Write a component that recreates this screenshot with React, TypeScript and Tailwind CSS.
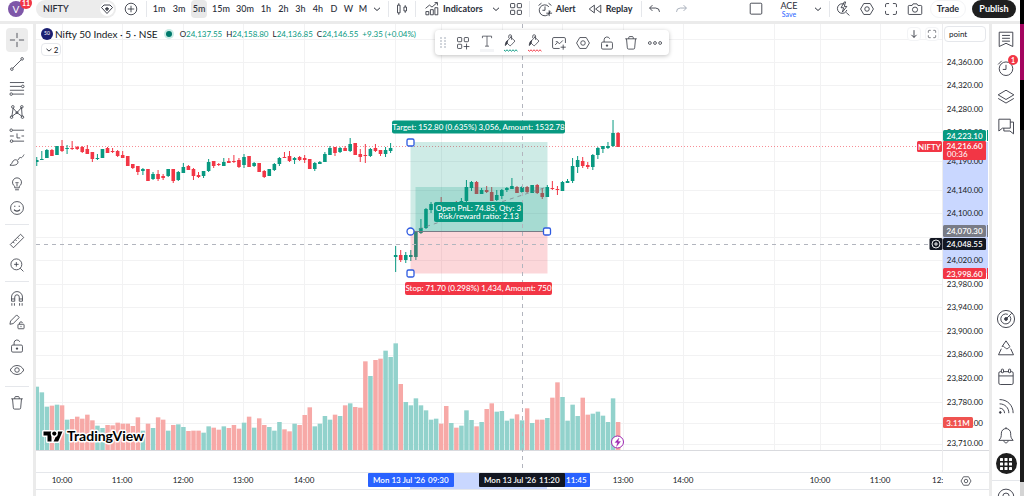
import clsx from "clsx";
import type { ReactNode } from "react";

const UP = "#089981";
const DOWN = "#f23645";

// [direction, body top, body bottom, high, low, volume]
type Candle = ["u" | "d", number, number, number, number, number];

const candles: Candle[] = [
  ["u", 160, 162, 157, 166, 190], ["u", 159, 160, 151, 160, 173], ["u", 150, 158, 149, 158, 130],
  ["d", 150, 156, 149, 156, 133], ["u", 146, 155, 146, 155, 136], ["d", 146, 151, 140, 152, 134],
  ["u", 148, 149, 145, 154, 91], ["d", 148, 149, 141, 150, 93], ["d", 147, 149, 146, 150, 100],
  ["d", 147, 152, 146, 153, 94], ["d", 149, 154, 145, 154, 106], ["d", 152, 159, 152, 162, 89],
  ["u", 158, 159, 154, 160, 73], ["u", 149, 158, 149, 158, 66], ["d", 148, 153, 147, 153, 75],
  ["d", 151, 152, 148, 153, 74], ["d", 151, 156, 150, 157, 82], ["d", 155, 158, 151, 158, 79],
  ["d", 156, 166, 156, 166, 79], ["d", 164, 168, 164, 169, 72], ["d", 166, 172, 166, 175, 98],
  ["u", 169, 171, 168, 175, 58], ["d", 169, 181, 169, 181, 79], ["u", 174, 179, 172, 180, 66],
  ["d", 174, 179, 170, 181, 98], ["d", 176, 178, 174, 180, 91], ["u", 169, 176, 169, 177, 58],
  ["d", 169, 181, 169, 183, 75], ["u", 172, 180, 171, 181, 77], ["u", 167, 173, 163, 173, 69],
  ["d", 166, 170, 165, 170, 57], ["d", 169, 176, 168, 180, 58], ["d", 175, 177, 172, 178, 58],
  ["u", 171, 176, 171, 178, 52], ["u", 162, 171, 159, 172, 71], ["d", 161, 166, 161, 168, 67],
  ["d", 164, 165, 163, 166, 61], ["u", 162, 166, 158, 166, 71], ["d", 161, 163, 158, 163, 66],
  ["d", 161, 162, 155, 163, 75], ["d", 160, 167, 158, 168, 64], ["u", 157, 165, 154, 168, 82],
  ["d", 156, 167, 156, 167, 100], ["u", 163, 166, 162, 167, 67], ["d", 163, 172, 163, 172, 95],
  ["d", 171, 177, 170, 178, 75], ["u", 169, 176, 169, 176, 69], ["u", 164, 170, 163, 171, 58],
  ["u", 158, 164, 157, 166, 84], ["d", 157, 158, 152, 158, 62], ["d", 156, 161, 151, 162, 56],
  ["u", 158, 160, 157, 164, 79], ["d", 157, 160, 156, 161, 75], ["d", 158, 160, 155, 163, 105],
  ["d", 159, 169, 159, 169, 128], ["u", 163, 169, 162, 171, 71], ["u", 162, 164, 161, 164, 79],
  ["u", 154, 162, 152, 162, 102], ["u", 148, 155, 146, 155, 91], ["d", 147, 153, 147, 156, 106],
  ["u", 148, 152, 147, 153, 102], ["d", 148, 151, 146, 151, 134], ["u", 144, 151, 138, 152, 140],
  ["d", 143, 155, 143, 155, 129], ["d", 154, 157, 149, 162, 127], ["d", 155, 156, 144, 163, 266],
  ["u", 149, 156, 148, 157, 222], ["d", 148, 151, 144, 152, 270], ["d", 150, 154, 150, 156, 274],
  ["u", 150, 154, 147, 157, 298], ["u", 148, 151, 143, 153, 279], ["u", 255, 257, 246, 272, 320],
  ["d", 255, 260, 250, 262, 198], ["u", 255, 260, 252, 263, 144], ["u", 255, 257, 250, 261, 134],
  ["u", 231, 257, 231, 260, 155], ["u", 228, 233, 219, 234, 134], ["u", 209, 228, 208, 229, 119],
  ["u", 204, 210, 202, 213, 91], ["u", 203, 209, 202, 210, 94], ["d", 202, 207, 197, 208, 79],
  ["d", 203, 208, 202, 210, 132], ["u", 204, 208, 202, 210, 81], ["d", 203, 208, 201, 209, 67],
  ["u", 201, 206, 198, 208, 73], ["u", 187, 201, 180, 202, 119], ["u", 182, 188, 181, 191, 90],
  ["d", 182, 194, 181, 194, 71], ["u", 190, 194, 188, 194, 84], ["d", 190, 192, 186, 193, 123],
  ["d", 192, 201, 187, 201, 140], ["u", 195, 200, 190, 201, 115], ["u", 190, 196, 189, 199, 117],
  ["u", 188, 190, 187, 192, 88], ["u", 186, 189, 178, 189, 94], ["d", 187, 193, 186, 193, 107],
  ["u", 187, 192, 186, 193, 89], ["d", 187, 192, 186, 193, 125], ["u", 185, 193, 185, 193, 81],
  ["d", 185, 193, 184, 194, 91], ["d", 193, 197, 188, 199, 91], ["u", 187, 197, 185, 197, 96],
  ["d", 188, 189, 181, 190, 157], ["d", 189, 190, 186, 195, 203], ["u", 182, 191, 181, 191, 159],
  ["u", 181, 183, 179, 183, 88], ["u", 166, 181, 158, 183, 136], ["u", 160, 167, 156, 173, 102],
  ["d", 161, 166, 157, 168, 157], ["d", 165, 167, 162, 169, 106], ["u", 155, 167, 154, 170, 109],
  ["u", 148, 155, 147, 159, 115], ["u", 146, 149, 146, 153, 103], ["u", 146, 148, 142, 149, 84],
  ["u", 133, 146, 120, 147, 155], ["d", 133, 147, 132, 147, 84],
];

const candleX = (i: number) => 36.75 + i * 5.055;

const gridX = [62, 122, 183, 243, 304, 395, 441, 502, 562, 623, 683, 774, 820, 880];
const gridY = [39, 62, 85, 109, 132, 161, 190, 213, 237, 260, 284, 307, 331, 355, 378, 402, 423, 444];

const priceLabels: [number, string][] = [
  [62, "24,360.00"], [85, "24,320.00"], [109, "24,280.00"], [132, "24,240.00"],
  [161, "24,190.00"], [190, "24,140.00"], [213, "24,100.00"], [260, "24,020.00"],
  [284, "23,980.00"], [307, "23,940.00"], [331, "23,900.00"], [354, "23,860.00"],
  [378, "23,820.00"], [402, "23,780.00"], [423, "23,740.00"], [443, "23,710.00"],
];

const timeLabels: [number, string][] = [
  [62, "10:00"], [122, "11:00"], [183, "12:00"], [243, "13:00"], [304, "14:00"],
  [623, "13:00"], [683, "14:00"], [820, "10:00"], [880, "11:00"],
];

function Icon({ children, className }: { children: ReactNode; className?: string }) {
  return (
    <svg
      viewBox="0 0 28 28"
      fill="none"
      stroke="currentColor"
      strokeWidth="1.3"
      className={clsx("shrink-0", className ?? "size-[18px]")}
      aria-hidden="true"
    >
      {children}
    </svg>
  );
}

const Chevron = () => (
  <Icon className="size-[14px]">
    <path d="M8 11.5l6 5.5 6-5.5" strokeWidth="2" />
  </Icon>
);

const HexIcon = ({ className }: { className?: string }) => (
  <Icon className={className}>
    <path d="M9 5.5h10l5 8.5-5 8.5H9L4 14z" />
    <circle cx="14" cy="14" r="3.5" />
  </Icon>
);

const GridIcon = ({ plus }: { plus?: boolean }) => (
  <Icon>
    <rect x="5.500" y="5.500" width="6.500" height="6.500" rx="1" />
    <rect x="16" y="5.500" width="6.500" height="6.500" rx="1" />
    <rect x="5.500" y="16" width="6.500" height="6.500" rx="1" />
    {plus ? <path d="M19.500 15v9M15 19.500h9" /> : <rect x="16" y="16" width="6.500" height="6.500" rx="1" />}
  </Icon>
);

const TrashIcon = () => (
  <Icon>
    <path d="M5 7.500h18M10.500 7.500v-2a1.500 1.500 0 0 1 1.500-1.500h4a1.500 1.500 0 0 1 1.500 1.500v2M7 7.500l1.300 14a2 2 0 0 0 2 2h7.400a2 2 0 0 0 2-2L21 7.500" />
  </Icon>
);

const UnlockIcon = () => (
  <Icon>
    <rect x="5.500" y="12.500" width="17" height="11" rx="2" />
    <path d="M9.500 12.500V9a4.500 4.500 0 0 1 8.700-1.500M14 16.500v3" />
    <circle cx="14" cy="18" r="1" fill="currentColor" />
  </Icon>
);

const AlarmIcon = () => (
  <Icon>
    <path d="M22 17a8.500 8.500 0 1 1-2-6.500M14 10v6h-4M4 8.500L8.500 5M19.500 5L24 8.500M20.500 16v9M16 20.500h9" />
  </Icon>
);

const BucketIcon = () => (
  <Icon className="size-4">
    <path d="M12 6l9 8-7 7.500a2 2 0 0 1-3 0L7 17.500a2 2 0 0 1 0-3L15 6M15 12V5.500a2.500 2.500 0 0 0-5 0V9" />
    <path d="M8 13c-3 2-4 5-4 9 2-1 3-3 3.500-5z" fill="currentColor" />
  </Icon>
);

const FullscreenIcon = ({ className }: { className?: string }) => (
  <Icon className={className}>
    <path d="M5.500 11V7.500a2 2 0 0 1 2-2H11M17 5.500h3.500a2 2 0 0 1 2 2V11M22.500 17v3.500a2 2 0 0 1-2 2H17M11 22.500H7.500a2 2 0 0 1-2-2V17" />
  </Icon>
);

const ToolButton = ({ label, className, children }: { label: string; className?: string; children: ReactNode }) => (
  <button type="button" aria-label={label} className={clsx("flex items-center justify-center", className)}>
    {children}
  </button>
);

const Divider = () => <span className="h-4 w-px shrink-0 bg-gray-200" />;

const intervals = [
  { label: "1m", width: "w-5" },
  { label: "3m", width: "w-5" },
  { label: "5m", width: "w-4 mx-0.5" },
  { label: "15m", width: "w-6" },
  { label: "30m", width: "w-6" },
  { label: "1h", width: "w-[18px]" },
  { label: "2h", width: "w-[17px]" },
  { label: "3h", width: "w-[17px]" },
  { label: "4h", width: "w-[18px]" },
  { label: "D", width: "w-[14px]" },
  { label: "W", width: "w-[15px]" },
  { label: "M", width: "w-[14px]" },
];

function Header() {
  return (
    <header className="flex h-[21px] shrink-0 items-start pr-1 text-[#2a2e39]">
      <div className="flex h-[18px] flex-1 items-center">
        <button type="button" aria-label="Account" className="relative ml-2 flex size-4 items-center justify-center rounded-full bg-[#7e57a8] text-[10px] text-white">
          V
          <span className="absolute -top-1 left-3 flex h-3 w-3 items-center justify-center rounded-full bg-[#f23645] text-[7px] font-bold">
            11
          </span>
        </button>
        <div className="ml-3 flex h-[18px] w-20 items-center justify-between rounded-full bg-[#ececec] pr-0.5 pl-[7px]">
          <button type="button" className="text-[9px] font-semibold">NIFTY</button>
          <button type="button" aria-label="Symbol details" className="flex size-3.5 items-center justify-center rounded-full bg-white">
            <Icon className="size-3.5">
              <path d="M8 6h12l5 5-11 12L3 11z" strokeWidth="1.800" />
              <path d="M14 10v8M10 13.500h8" strokeWidth="2.500" />
            </Icon>
          </button>
        </div>
        <ToolButton label="Compare symbol" className="ml-1.5">
          <Icon>
            <circle cx="14" cy="14" r="9" />
            <path d="M14 9v10M9 14h10" />
          </Icon>
        </ToolButton>
        <span className="w-1.5" />
        <Divider />
        <span className="w-0.5" />
        {intervals.map(({ label, width }) => (
          <button
            key={label}
            type="button"
            className={clsx("h-[18px] shrink-0 rounded-sm text-center text-[9px] font-medium", width, label === "5m" && "bg-[#e8e8e8]")}
          >
            {label}
          </button>
        ))}
        <ToolButton label="More intervals" className="mr-1">
          <Chevron />
        </ToolButton>
        <Divider />
        <ToolButton label="Chart type" className="mx-1">
          <Icon>
            <path d="M7 8h4v12H7zM9 5v3M9 20v3M17 11h4v6h-4zM19 8v3M19 17v3" />
          </Icon>
        </ToolButton>
        <Divider />
        <button type="button" className="ml-[7px] flex items-center gap-0.5 text-[9px] font-bold">
          <Icon>
            <path d="M4.500 23v-5H9v5zM11.500 23v-8H16v8zM18.500 23V12H23v11zM4 13l6-5 4 3 8-7M18 4h4.500v4.500" />
          </Icon>
          Indicators
        </button>
        <ToolButton label="Favorite indicators" className="ml-1.5">
          <Chevron />
        </ToolButton>
        <ToolButton label="Indicator templates" className="mx-1">
          <GridIcon />
        </ToolButton>
        <Divider />
        <button type="button" className="ml-1.5 flex items-center gap-0.5 text-[9px] font-bold">
          <AlarmIcon />
          Alert
        </button>
        <button type="button" className="ml-2.5 flex items-center gap-0.5 text-[9px] font-bold">
          <Icon>
            <path d="M13 8v12l-8-6zM23 8v12l-8-6z" strokeLinejoin="round" />
          </Icon>
          Replay
        </button>
        <span className="w-2" />
        <Divider />
        <ToolButton label="Undo" className="ml-1">
          <Icon>
            <path d="M10 8l-4.500 4.500L10 17M6 12.500h9a6 6 0 0 1 6 6" />
          </Icon>
        </ToolButton>
        <ToolButton label="Redo" className="ml-2 text-gray-400">
          <Icon>
            <path d="M18 8l4.500 4.500L18 17M22 12.500h-9a6 6 0 0 0-6 6" />
          </Icon>
        </ToolButton>
      </div>

      <div className="flex h-[18px] items-center">
        <ToolButton label="Layout setup">
          <Icon>
            <rect x="5" y="5" width="18" height="17" rx="1.500" />
          </Icon>
        </ToolButton>
        <button type="button" className="ml-3 flex w-6 flex-col items-center leading-none">
          <span className="text-[9px] leading-[9px]">ACE</span>
          <span className="text-[7px] leading-[8px] text-[#2962ff]">Save</span>
        </button>
        <ToolButton label="Manage layouts" className="mr-1 ml-2.5">
          <Chevron />
        </ToolButton>
        <Divider />
        <div className="ml-1 flex gap-1.5">
          <ToolButton label="Quick search">
            <Icon>
              <path d="M16 6.500a7.500 7.500 0 1 0 4 9M19 19.500l5 4.500" />
              <path d="M16 3l-5 9h4l-2 7 7-9h-4l2-7z" />
            </Icon>
          </ToolButton>
          <ToolButton label="Settings">
            <HexIcon />
          </ToolButton>
          <ToolButton label="Fullscreen mode">
            <FullscreenIcon />
          </ToolButton>
          <ToolButton label="Take a snapshot">
            <Icon>
              <path d="M5 8.500h4.500L11 6h6l1.500 2.500H23a1.500 1.500 0 0 1 1.500 1.500v11a1.500 1.500 0 0 1-1.500 1.500H5A1.500 1.500 0 0 1 3.500 21V10A1.500 1.500 0 0 1 5 8.500z" />
              <circle cx="14" cy="15" r="4" />
            </Icon>
          </ToolButton>
        </div>
        <button type="button" className="ml-1.5 h-[18px] w-9 rounded-full border border-gray-100 text-[9px] font-bold">Trade</button>
        <button type="button" className="ml-1.5 h-[18px] w-11 rounded-full bg-[#1f1f1f] text-[9px] font-bold text-white">Publish</button>
      </div>
    </header>
  );
}

const drawingTools: { label: string; group: number; icon: ReactNode }[] = [
  { label: "Cross", group: 0, icon: <Icon><path d="M14 3v8M14 17v8M3 14h8M17 14h8" /></Icon> },
  { label: "Trend line", group: 0, icon: <Icon><path d="M7.500 20.500l13-13" /><circle cx="6" cy="22" r="2" /><circle cx="22" cy="6" r="2" /></Icon> },
  {
    label: "Fib retracement",
    group: 0,
    icon: <Icon><path d="M3 5.500h22M3 11.500h17.500M3 17.500h22M7.500 23.500H25" /><circle cx="23" cy="11.500" r="2" /><circle cx="5" cy="23.500" r="2" /></Icon>,
  },
  {
    label: "XABCD pattern",
    group: 0,
    icon: <Icon><path d="M6 21L8 8l6 7 7-8 1 14-8-6-8 6" /><circle cx="5.500" cy="22" r="2" /><circle cx="7.500" cy="6" r="2" /><circle cx="21.500" cy="6" r="2" /><circle cx="22.500" cy="22" r="2" /><circle cx="14" cy="15" r="1.500" /></Icon>,
  },
  {
    label: "Long position",
    group: 0,
    icon: <Icon><path d="M7.500 5H25M7.500 22H25M14 10v7h5M3 14h6M21 14h4" /><circle cx="5" cy="5" r="2" /><circle cx="5.500" cy="22" r="2" /></Icon>,
  },
  {
    label: "Brush",
    group: 0,
    icon: <Icon><path d="M3 22c3-1 3-4 5-6.500 2-2.500 5-2.500 7 0 1.500 2.500 0 5-3 6-3 1-6 1-9 .5zM15 14.500l4-5c1.500 2 3 1 6-4" /></Icon>,
  },
  {
    label: "Text",
    group: 0,
    icon: <Icon><path d="M10.500 20v-2.500A7 7 0 1 1 17.500 17.500V20zM11 23h6M14 18v-5M11.500 12h5" /></Icon>,
  },
  {
    label: "Icons",
    group: 0,
    icon: <Icon><circle cx="14" cy="14" r="10" /><path d="M9.500 16.500c2 3 7 3 9 0M10.500 10.500v1.500M17.500 10.500v1.500" strokeWidth="1.800" /></Icon>,
  },
  {
    label: "Measure",
    group: 1,
    icon: <Icon><path d="M3.500 19.500l16-16 5 5-16 16zM8 15.500l2 2M11.500 12l2 2M15 8.500l2 2" strokeLinejoin="round" /></Icon>,
  },
  {
    label: "Zoom in",
    group: 1,
    icon: <Icon><circle cx="13" cy="13" r="8.500" /><path d="M19 19l5 5M13 9.500v7M9.500 13h7" /></Icon>,
  },
  {
    label: "Magnet mode",
    group: 2,
    icon: <Icon><path d="M5.500 19v-6.500a8.500 8.500 0 0 1 17 0V19h-5v-6.500a3.500 3.500 0 0 0-7 0V19zM5.500 15.500h5M17.500 15.500h5M6 22v4M10 22v4M18 22v4M22 22v4" /></Icon>,
  },
  {
    label: "Stay in drawing mode",
    group: 2,
    icon: <Icon><path d="M3 17.500l1-5L13.500 3l4 4L8 16.500z" /><rect x="15.500" y="17.500" width="9.500" height="7" rx="1" /><path d="M18 17.500v-2a2.300 2.300 0 0 1 4.500 0M20.200 20v2" /></Icon>,
  },
  { label: "Lock drawings", group: 2, icon: <UnlockIcon /> },
  {
    label: "Hide drawings",
    group: 2,
    icon: <Icon><path d="M3.500 14C6 9 10 7 14 7s8 2 10.500 7C22 19 18 21 14 21s-8-2-10.500-7z" /><circle cx="14" cy="14" r="3.500" /></Icon>,
  },
  { label: "Remove objects", group: 3, icon: <TrashIcon /> },
];

function DrawingBar() {
  return (
    <nav aria-label="Drawing tools" className="flex w-[33px] shrink-0 flex-col items-center pt-1 text-[#3a3d47]">
      {drawingTools.map(({ label, group, icon }, i) => (
        <div key={label} className="flex flex-col items-center">
          {i > 0 && drawingTools[i - 1].group !== group && <span className="my-1 h-px w-6 bg-gray-200" />}
          <ToolButton label={label} className={clsx("h-6 w-[22px] rounded-sm", i === 0 && "bg-[#ececec]")}>
            {icon}
          </ToolButton>
        </div>
      ))}
    </nav>
  );
}

function Handle({ x, y, round }: { x: number; y: number; round?: boolean }) {
  return <rect x={x - 3.5} y={y - 3.5} width="7" height="7" rx={round ? 3.5 : 1.5} fill="#fff" stroke="#2f5be0" strokeWidth="1.300" />;
}

function Tag({ x, y, w, h, fill, children }: { x: number; y: number; w: number; h: number; fill: string; children?: ReactNode }) {
  return (
    <>
      <rect x={x} y={y} width={w} height={h} rx="1.500" fill={fill} />
      <text x={x + w / 2} y={y + h / 2 + 3} textAnchor="middle" fill="#fff" className="text-[8px] font-semibold">
        {children}
      </text>
    </>
  );
}

function Plot() {
  return (
    <svg viewBox="36 24 907 448" preserveAspectRatio="xMinYMin slice" className="block h-full w-full" role="img" aria-label="Nifty 50 Index candles">
      <g stroke="#f2f2f3">
        {gridX.map((x) => <path key={x} d={`M${x + 0.5} 24V450`} />)}
        {gridY.map((y) => <path key={y} d={`M36 ${y + 0.5}H943`} />)}
      </g>
      <path d="M36 450.500H943" stroke="#d9dade" />
      <path d="M942.500 24V472" stroke="#ececee" />

      {candles.map(([dir, , , , , volume], i) => (
        <rect
          key={i}
          x={candleX(i) - 2.2}
          y={450 - volume / 3}
          width="4.500"
          height={volume / 3}
          fill={dir === "u" ? "#92d2cc" : "#f7a9a7"}
        />
      ))}

      <path d="M36 146.500H917" stroke={DOWN} strokeWidth="0.800" strokeDasharray="1 2" opacity="0.700" />

      {candles.map(([dir, top, bottom, high, low], i) => (
        <g key={i} fill={dir === "u" ? UP : DOWN}>
          <rect x={candleX(i) - 0.5} y={high} width="1" height={low - high} />
          <rect x={candleX(i) - 1.8} y={top} width="3.600" height={bottom - top} />
        </g>
      ))}

      {/* long position */}
      <rect x="410.500" y="142" width="137" height="89.500" fill={UP} opacity="0.200" />
      <rect x="415.500" y="187" width="132" height="44.500" fill={UP} opacity="0.200" />
      <rect x="410.500" y="231.500" width="137" height="42" fill={DOWN} opacity="0.200" />
      <path d="M411 231.500H547" stroke="#787b86" />
      <path d="M411 231.500L547 187" stroke="#787b86" strokeWidth="0.700" strokeDasharray="4 4" />

      <g stroke="#b2b5be" strokeDasharray="4 4">
        <path d="M522.500 24V472" />
        <path d="M36 244.500H930" />
      </g>

      <Handle x={410.5} y={142.5} />
      <Handle x={410.5} y={231.5} round />
      <Handle x={547} y={231.5} />
      <Handle x={410.5} y={273.5} />

      <g fill="#fff" textAnchor="middle" className="text-[8px] font-medium">
        <rect x="392" y="120.500" width="173" height="13" rx="2" fill={UP} />
        <text x="478.500" y="130">Target: 152.80 (0.635%) 3,056, Amount: 1532.78</text>
        <rect x="434" y="202" width="89" height="20" rx="2" fill={UP} />
        <text x="478.500" y="211">Open PnL: 74.85, Qty: 3</text>
        <text x="478.500" y="219">Risk/reward ratio: 2.13</text>
        <rect x="405" y="282" width="147" height="13" rx="2" fill={DOWN} />
        <text x="478.500" y="291">Stop: 71.70 (0.298%) 1,434, Amount: 750</text>
      </g>

      <Tag x={917} y={141} w={25} h={11} fill={DOWN}>NIFTY</Tag>
      <rect x="929.500" y="238" width="13" height="12" rx="1.500" fill="#131722" />
      <g fill="none" stroke="#fff" strokeWidth="0.900">
        <circle cx="936" cy="244" r="4" />
        <path d="M936 242v4M934 244h4" />
      </g>

      <g fill="#fff" stroke="#9c27b0">
        <circle cx="617.500" cy="442" r="6" />
        <path d="M619 438l-4 4.500h2.500l-1 4 4-5H618z" fill="#9c27b0" strokeWidth="0.300" />
      </g>

      {/* watermark */}
      <g stroke="#fff" strokeWidth="3" strokeLinejoin="round" className="[paint-order:stroke]">
        <path d="M43.500 431.500h8v10h-4v-6h-4zM58 431.500h4.500l-4.300 10h-4.600z" />
        <circle cx="54.300" cy="433.600" r="2.100" />
        <text x="67" y="441" className="text-[14px] font-bold">TradingView</text>
      </g>
    </svg>
  );
}

function PriceAxis() {
  return (
    <svg viewBox="943 24 46 448" preserveAspectRatio="xMinYMin slice" className="block h-full w-full text-[8px]" role="img" aria-label="Price scale">
      <rect x="943" y="142" width="45" height="131" fill="#c9d7ff" />
      <path d="M943 450.500h46" stroke="#d9dade" />
      {priceLabels.map(([y, label]) => (
        <text key={label} x="983" y={y + 3} textAnchor="end" fill="#131722">{label}</text>
      ))}
      <Tag x={943} y={130} w={43} h={11} fill={UP}>24,223.10</Tag>
      <rect x="943" y="141" width="43" height="19" rx="1" fill={DOWN} />
      <text x="964.500" y="149" textAnchor="middle" fill="#fff" className="font-semibold">24,216.60</text>
      <text x="947" y="157" fill="#fff">00:36</text>
      <Tag x={943} y={225} w={43} h={12} fill="#787b86">24,070.30</Tag>
      <Tag x={943} y={238} w={43} h={12} fill="#131722">24,048.55</Tag>
      <Tag x={943} y={268} w={43} h={11} fill={DOWN}>23,998.60</Tag>
      <Tag x={943} y={417} w={30} h={11} fill="#ef5350">3.11M</Tag>
      <path d="M987.500 130v11" stroke={UP} />
      <path d="M987.500 225v12" stroke="#787b86" />
      <path d="M987.500 268v11" stroke={DOWN} />
    </svg>
  );
}

function TimeAxis() {
  return (
    <svg viewBox="36 472 907 18" preserveAspectRatio="xMinYMin slice" className="block h-full w-full text-[8px]" role="img" aria-label="Time scale">
      <rect x="410" y="472" width="137" height="17" fill="#c9d7ff" />
      {timeLabels.map(([x, label]) => (
        <text key={x} x={x} y="482" textAnchor="middle" fill="#131722">{label}</text>
      ))}
      <text x="932" y="482" fill="#131722">12:</text>
      <g fill="#fff" className="font-semibold">
        <rect x="368" y="472" width="86" height="14" rx="1" fill="#2962ff" />
        <text x="373" y="482">Mon 13 Jul '26</text>
        <text x="428" y="482">09:30</text>
        <rect x="540" y="472" width="50" height="14" rx="1" fill="#2962ff" />
        <text x="566" y="482">11:45</text>
        <rect x="479" y="472" width="86" height="14" rx="1" fill="#131722" />
        <text x="484" y="482">Mon 13 Jul '26</text>
        <text x="539" y="482">11:20</text>
      </g>
    </svg>
  );
}

const quotes = [
  ["O", "24,137.55"],
  ["H", "24,158.80"],
  ["L", "24,136.85"],
  ["C", "24,146.55"],
];

function Legend() {
  return (
    <div className="absolute top-1 left-[5px]">
      <div className="flex h-3 items-center text-[8px]">
        <span className="flex size-3 items-center justify-center rounded-full bg-[#1a1f71] text-[5px] text-white">50</span>
        <h1 className="ml-0.5 text-[10px] whitespace-nowrap">Nifty 50 Index · 5 · NSE</h1>
        <span className="mx-1.5 flex size-2.5 items-center justify-center rounded-full bg-[#c9ece5]">
          <span className="size-1.5 rounded-full bg-[#00796b]" />
        </span>
        <p className="flex gap-1 whitespace-nowrap">
          {quotes.map(([key, value]) => (
            <span key={key}>
              {key}
              <span className="text-[#089981]">{value}</span>
            </span>
          ))}
          <span className="text-[#089981]">+9.35 (+0.04%)</span>
        </p>
      </div>
      <button type="button" className="mt-[3px] flex h-[13px] w-5 items-center justify-center rounded-sm border border-gray-200 bg-white text-[8px]">
        <Icon className="size-2.5">
          <path d="M7 11l7 6 7-6" strokeWidth="2.500" />
        </Icon>
        2
      </button>
    </div>
  );
}

const Wave = ({ color }: { color: string }) => (
  <svg viewBox="0 0 14 3" className="h-[3px] w-3.5" fill="none" stroke={color} aria-hidden="true">
    <path d="M0 1l1.500 1.200L3 .8l1.500 1.400L6 .8l1.500 1.400L9 .8l1.500 1.400L12 .8l1.500 1.400" />
  </svg>
);

function FloatingToolbar() {
  return (
    <div
      role="toolbar"
      aria-label="Drawing settings"
      className="absolute top-1.5 left-[399px] flex h-[25px] items-center rounded bg-white pr-0.5 pl-1 text-[#3a3d47] shadow-[0_1px_4px_rgba(0,0,0,0.25)]"
    >
      <svg viewBox="0 0 8 12" className="mr-1 h-3 w-2 fill-gray-400" aria-hidden="true">
        {[1, 4, 7, 10].map((y) => (
          <g key={y}>
            <circle cx="2" cy={y} r="0.800" />
            <circle cx="6" cy={y} r="0.800" />
          </g>
        ))}
      </svg>
      <ToolButton label="Templates" className="w-6"><GridIcon plus /></ToolButton>
      <ToolButton label="Text color" className="w-6 flex-col">
        <Icon className="size-4"><path d="M6 9V5.500h16V9M14 5.500V23M10.500 23h7" /></Icon>
        <span className="h-[3px] w-3.5 bg-gray-100" />
      </ToolButton>
      <ToolButton label="Profit background" className="w-6 flex-col">
        <BucketIcon />
        <Wave color={UP} />
      </ToolButton>
      <ToolButton label="Stop background" className="w-6 flex-col">
        <BucketIcon />
        <Wave color={DOWN} />
      </ToolButton>
      <ToolButton label="Add to chart" className="w-6">
        <Icon><path d="M24 14V7.500a2 2 0 0 0-2-2H6a2 2 0 0 0-2 2v13a2 2 0 0 0 2 2h9M8 17l4-4 3 2 5-5M9 12h3M20.500 16.500v8M16.500 20.500h8" /></Icon>
      </ToolButton>
      <ToolButton label="Drawing options" className="w-6"><HexIcon /></ToolButton>
      <ToolButton label="Lock" className="w-6"><UnlockIcon /></ToolButton>
      <ToolButton label="Remove" className="w-6"><TrashIcon /></ToolButton>
      <ToolButton label="More" className="w-6">
        <Icon><circle cx="6" cy="14" r="2.200" /><circle cx="14" cy="14" r="2.200" /><circle cx="22" cy="14" r="2.200" /></Icon>
      </ToolButton>
    </div>
  );
}

function ChartPanel() {
  return (
    <main className="grid min-w-0 flex-1 grid-cols-[minmax(0,1fr)_46px] grid-rows-[minmax(0,1fr)_18px_6px]">
      <section className="relative min-h-0 overflow-hidden">
        <Plot />
        <Legend />
        <FloatingToolbar />
        <div className="absolute top-[3px] right-1 flex gap-1">
          <ToolButton label="Scroll to last bar" className="size-3.5 rounded-sm border border-gray-100 bg-white">
            <Icon className="size-3"><path d="M14 5v17M8 16l6 6 6-6" strokeWidth="1.800" /></Icon>
          </ToolButton>
          <ToolButton label="Maximize chart" className="size-3.5 rounded-sm border border-gray-100 bg-white">
            <FullscreenIcon className="size-3" />
          </ToolButton>
        </div>
      </section>
      <aside className="relative min-h-0 overflow-hidden">
        <PriceAxis />
        <button type="button" className="absolute top-0.5 left-px h-4 w-[42px] rounded-sm border border-gray-200 bg-white pl-1 text-left text-[8px]">
          point
        </button>
      </aside>
      <div className="overflow-hidden border-y border-gray-200">
        <TimeAxis />
      </div>
      <div className="flex items-center justify-center border-y border-gray-200">
        <ToolButton label="Axis settings"><HexIcon className="size-3.5" /></ToolButton>
      </div>
    </main>
  );
}

function SideBar() {
  const item = "h-[29px] w-full";
  return (
    <aside className="flex w-7 shrink-0 flex-col overflow-hidden text-[#3a3d47]">
      <ToolButton label="Watchlist" className={item}>
        <Icon className="size-5"><path d="M4.500 4.500h19v20L14 20l-9.500 4.500zM8.500 9h11M8.500 13h11M8.500 17h11" /></Icon>
      </ToolButton>
      <ToolButton label="Alerts" className={clsx(item, "relative")}>
        <Icon className="size-5"><circle cx="14" cy="15" r="9.500" /><path d="M14 9.500V16H9.500M3 9l5-5" /></Icon>
        <span className="absolute top-0.5 right-0.5 flex size-2.5 items-center justify-center rounded-full bg-[#f23645] text-[7px] font-bold text-white">1</span>
      </ToolButton>
      <ToolButton label="Object tree" className={item}>
        <Icon className="size-5"><path d="M14 4.500l11 6.500-11 6.500L3 11zM3 16l11 6.500L25 16" /></Icon>
      </ToolButton>
      <ToolButton label="Chats" className={item}>
        <Icon className="size-5"><path d="M4 4.500h16v12.500H9L4 21zM20 8.500h4.500V25l-5-4H11v-4" /></Icon>
      </ToolButton>

      <ToolButton label="Screeners" className={clsx(item, "mt-auto")}>
        <Icon className="size-5"><circle cx="14" cy="14" r="12" /><path d="M19.500 10a7 7 0 1 1-3-2.500M14 14l8-8" /><circle cx="14" cy="14" r="2" fill="currentColor" /></Icon>
      </ToolButton>
      <ToolButton label="Pine" className={item}>
        <Icon className="size-5"><path d="M8.500 12L14 4l5.500 8M8.500 12c3-2 4 3 6.500 3s3-2 4.500-3M7.500 15L3.500 23.500h21L20.500 15" /></Icon>
      </ToolButton>
      <ToolButton label="Calendars" className={item}>
        <Icon className="size-5"><rect x="4" y="6.500" width="20" height="18" rx="2" /><path d="M4 12.500h20" /><rect x="7.500" y="3" width="3" height="5" rx="1" fill="#fff" /><rect x="17.500" y="3" width="3" height="5" rx="1" fill="#fff" /></Icon>
      </ToolButton>
      <ToolButton label="News feed" className={item}>
        <Icon className="size-5"><path d="M5 5c11 0 19 8 19 19M5 11c7.500 0 13 5.500 13 13M5 17c4 0 7 3 7 7" /><circle cx="6" cy="23" r="1.200" fill="currentColor" /></Icon>
      </ToolButton>
      <ToolButton label="Notifications" className={item}>
        <Icon className="size-5"><path d="M4 21.500c3-3 3.500-5 3.500-10a6.500 6.500 0 0 1 13 0c0 5 .5 7 3.500 10zM11 22c.5 4 5.500 4 6 0M14 5V3" /></Icon>
      </ToolButton>
      <ToolButton label="Products" className={item}>
        <span className="flex size-[21px] items-center justify-center rounded-full bg-[#1f1f1f]">
          <svg viewBox="0 0 12 12" className="size-3 fill-white" aria-hidden="true">
            {[0, 4.5, 9].map((y) => [0, 4.5, 9].map((x) => <rect key={`${x}-${y}`} x={x} y={y} width="3" height="3" rx="0.500" />))}
          </svg>
        </span>
      </ToolButton>
      <span className="mt-0.5 h-px w-full shrink-0 bg-gray-200" />
      <ToolButton label="Help" className="h-[15px] w-full shrink-0 items-start overflow-hidden pt-1.5">
        <Icon className="size-5"><circle cx="14" cy="14" r="11" /><circle cx="14" cy="13" r="4.500" /></Icon>
      </ToolButton>
    </aside>
  );
}

export default function App() {
  return (
    <div className="flex h-screen overflow-hidden bg-white font-['Lato',sans-serif] text-[#131722]">
      <div className="flex min-w-0 flex-1 flex-col">
        <Header />
        <div className="h-[3px] shrink-0 bg-[#ebebeb]" />
        <div className="flex min-h-0 flex-1">
          <DrawingBar />
          <div className="w-[3px] shrink-0 bg-[#ebebeb]" />
          <ChartPanel />
          <div className="w-[3px] shrink-0 bg-[#ebebeb]" />
          <SideBar />
        </div>
      </div>
      {/* sliver of the window behind */}
      <div className="flex w-1 shrink-0 flex-col bg-[#1c1c1c]">
        <div className="h-6 bg-black" />
        <div className="h-14 bg-[#a3045f]" />
        <div className="h-[50px] bg-black" />
        <div className="mt-auto h-3.5 bg-[#d4d4d4]" />
      </div>
    </div>
  );
}
